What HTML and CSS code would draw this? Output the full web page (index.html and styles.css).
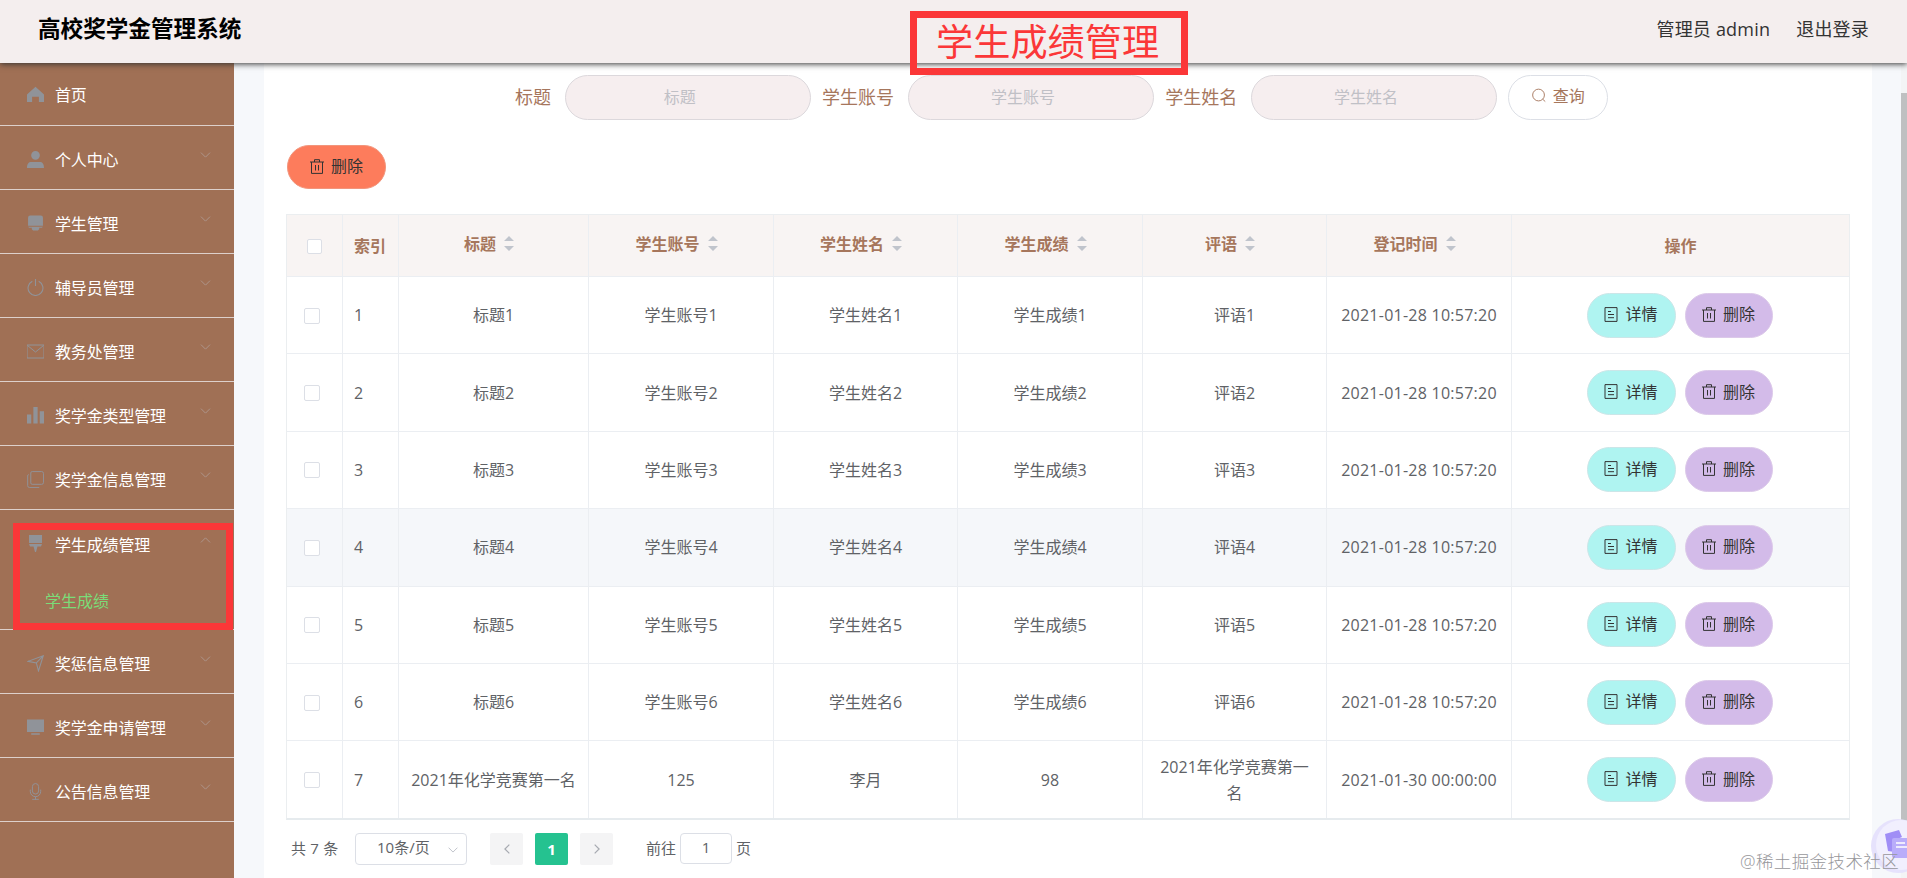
FILE: index.html
```html
<!DOCTYPE html>
<html lang="zh-CN">
<head>
<meta charset="utf-8">
<title>高校奖学金管理系统</title>
<link rel="stylesheet" href="styles.css">
</head>
<body>
<svg class="sprite" aria-hidden="true">
  <symbol id="home" viewBox="0 0 16 16"><path fill="currentColor" d="M8 .8 16 8v7h-4.800v-5H4.800v5H0V8z"/></symbol>
  <symbol id="user" viewBox="0 0 16 16"><path fill="currentColor" d="M8 0a4 4 0 1 1 0 8.200A4 4 0 0 1 8 0zM0 16c0-4 1.500-5.600 4-5.600h8c2.500 0 4 1.600 4 5.600z"/></symbol>
  <symbol id="school" viewBox="0 0 16 16"><path fill="currentColor" d="M3 .5h10a2 2 0 0 1 2 2V10H1V2.500a2 2 0 0 1 2-2zM1 11h14l-1 1h-2.500v1.500l-1.200 1H5.700l-1.200-1V12H2z"/></symbol>
  <symbol id="power" viewBox="0 0 16 16"><path fill="none" stroke="currentColor" d="M5 2.200a7 7 0 1 0 6 0M8 0v6.500"/></symbol>
  <symbol id="mail" viewBox="0 0 17 16"><path fill="none" stroke="currentColor" d="M0 1.500h17v13H0zM.5 2l8 6.500L16.500 2"/></symbol>
  <symbol id="bars" viewBox="0 0 16 16"><path fill="currentColor" d="M0 7h4v8.500H0zM6 0h4v15.500H6zM12 4h4v11.500h-4z"/></symbol>
  <symbol id="copy" viewBox="0 0 18 18"><path fill="none" stroke="currentColor" d="M5.500.6h10a2 2 0 0 1 2 2v9.500a2 2 0 0 1-2 2h-10a1.500 1.500 0 0 1-1.500-1.500V2.100A1.500 1.500 0 0 1 5.500.6zM2 3.800.7 4.500v11a2 2 0 0 0 2 2H13"/></symbol>
  <symbol id="brush" viewBox="0 0 16 17"><path fill="currentColor" d="M1.500 0h13v8h-13zM1.500 9h13l-1 2.500h-3.500L8.500 17h-1L6 11.500H2.500z"/></symbol>
  <symbol id="plane" viewBox="0 0 16 16"><path fill="none" stroke="currentColor" d="M15.300.7 10.800 15l-2-7.500L1 6zM8.800 7.500 15 1"/></symbol>
  <symbol id="screen" viewBox="0 0 16 16"><path fill="currentColor" d="M0 .5h16V12.200H0zM4 13.500h8v1.300H4z"/></symbol>
  <symbol id="mic" viewBox="0 0 16 18"><path fill="none" stroke="currentColor" d="M8 .6a3.300 3.300 0 0 1 3.300 3.300v4.500a3.300 3.300 0 0 1-6.600 0V3.900A3.300 3.300 0 0 1 8 .6zM2.500 7v2a5.500 5.500 0 0 0 11 0V7M8 14.500v3M4.500 17.300h7"/></symbol>
  <symbol id="down" viewBox="0 0 12 7"><path fill="none" stroke="currentColor" d="m.7.7 5.300 5.300L11.300.7"/></symbol>
  <symbol id="trash" viewBox="0 0 14 15"><path fill="none" stroke="currentColor" d="M0 3h14M1.500 3v11.400h11V3M4.500 3V.7h5V3M5.500 6v5.500M8.500 6v5.500"/></symbol>
  <symbol id="doc" viewBox="0 0 14 15"><path fill="none" stroke="currentColor" d="M1 .6h12v13.800H1zM4 4.500h3M4 7.500h6M4 10.700h6"/></symbol>
  <symbol id="search" viewBox="0 0 15 15"><path fill="none" stroke="currentColor" d="M7 .7a6.300 6.300 0 1 1 0 12.600A6.300 6.300 0 0 1 7 .7zM11.500 11.500l2.700 2.500"/></symbol>
  <symbol id="sort" viewBox="0 0 10 15"><path fill="#c0c4cc" d="M5 0l5 5H0zM0 10h10l-5 5z"/></symbol>
</svg>

<header class="topbar">
  <h1 class="brand">高校奖学金管理系统</h1>
  <nav class="account"><span>管理员 admin</span><span>退出登录</span></nav>
</header>

<div class="shell">
  <aside class="sidebar">
    <div class="item item-home"><svg class="ico"><use href="#home"/></svg><span>首页</span></div>
    <div class="item"><svg class="ico"><use href="#user"/></svg><span>个人中心</span><svg class="caret"><use href="#down"/></svg></div>
    <div class="item"><svg class="ico"><use href="#school"/></svg><span>学生管理</span><svg class="caret"><use href="#down"/></svg></div>
    <div class="item"><svg class="ico"><use href="#power"/></svg><span>辅导员管理</span><svg class="caret"><use href="#down"/></svg></div>
    <div class="item"><svg class="ico"><use href="#mail"/></svg><span>教务处管理</span><svg class="caret"><use href="#down"/></svg></div>
    <div class="item"><svg class="ico"><use href="#bars"/></svg><span>奖学金类型管理</span><svg class="caret"><use href="#down"/></svg></div>
    <div class="item"><svg class="ico"><use href="#copy"/></svg><span>奖学金信息管理</span><svg class="caret"><use href="#down"/></svg></div>
    <div class="group">
      <div class="item item-open"><svg class="ico"><use href="#brush"/></svg><span>学生成绩管理</span><svg class="caret caret-up"><use href="#down"/></svg></div>
      <div class="subitem">学生成绩</div>
      <div class="mark mark-menu"></div>
    </div>
    <div class="item"><svg class="ico"><use href="#plane"/></svg><span>奖惩信息管理</span><svg class="caret"><use href="#down"/></svg></div>
    <div class="item"><svg class="ico"><use href="#screen"/></svg><span>奖学金申请管理</span><svg class="caret"><use href="#down"/></svg></div>
    <div class="item"><svg class="ico"><use href="#mic"/></svg><span>公告信息管理</span><svg class="caret"><use href="#down"/></svg></div>
  </aside>

  <main class="panel">
    <form class="filters">
      <label>标题</label><div class="field">标题</div>
      <label>学生账号</label><div class="field">学生账号</div>
      <label>学生姓名</label><div class="field">学生姓名</div>
      <div class="btn btn-search"><svg><use href="#search"/></svg>查询</div>
    </form>
    <div class="actions"><div class="btn btn-remove-all"><svg><use href="#trash"/></svg>删除</div></div>

    <div class="table">
      <div class="row head">
        <div><i class="box"></i></div><div class="idx">索引</div>
        <div class="sortable">标题<svg><use href="#sort"/></svg></div>
        <div class="sortable">学生账号<svg><use href="#sort"/></svg></div>
        <div class="sortable">学生姓名<svg><use href="#sort"/></svg></div>
        <div class="sortable">学生成绩<svg><use href="#sort"/></svg></div>
        <div class="sortable">评语<svg><use href="#sort"/></svg></div>
        <div class="sortable">登记时间<svg><use href="#sort"/></svg></div>
        <div>操作</div>
      </div>
      <div class="row"><div><i class="box"></i></div><div class="idx">1</div><div>标题1</div><div>学生账号1</div><div>学生姓名1</div><div>学生成绩1</div><div>评语1</div><div class="time">2021-01-28 10:57:20</div><div class="ops"><span class="btn btn-view"><svg><use href="#doc"/></svg>详情</span><span class="btn btn-del"><svg><use href="#trash"/></svg>删除</span></div></div>
      <div class="row"><div><i class="box"></i></div><div class="idx">2</div><div>标题2</div><div>学生账号2</div><div>学生姓名2</div><div>学生成绩2</div><div>评语2</div><div class="time">2021-01-28 10:57:20</div><div class="ops"><span class="btn btn-view"><svg><use href="#doc"/></svg>详情</span><span class="btn btn-del"><svg><use href="#trash"/></svg>删除</span></div></div>
      <div class="row"><div><i class="box"></i></div><div class="idx">3</div><div>标题3</div><div>学生账号3</div><div>学生姓名3</div><div>学生成绩3</div><div>评语3</div><div class="time">2021-01-28 10:57:20</div><div class="ops"><span class="btn btn-view"><svg><use href="#doc"/></svg>详情</span><span class="btn btn-del"><svg><use href="#trash"/></svg>删除</span></div></div>
      <div class="row hover"><div><i class="box"></i></div><div class="idx">4</div><div>标题4</div><div>学生账号4</div><div>学生姓名4</div><div>学生成绩4</div><div>评语4</div><div class="time">2021-01-28 10:57:20</div><div class="ops"><span class="btn btn-view"><svg><use href="#doc"/></svg>详情</span><span class="btn btn-del"><svg><use href="#trash"/></svg>删除</span></div></div>
      <div class="row"><div><i class="box"></i></div><div class="idx">5</div><div>标题5</div><div>学生账号5</div><div>学生姓名5</div><div>学生成绩5</div><div>评语5</div><div class="time">2021-01-28 10:57:20</div><div class="ops"><span class="btn btn-view"><svg><use href="#doc"/></svg>详情</span><span class="btn btn-del"><svg><use href="#trash"/></svg>删除</span></div></div>
      <div class="row"><div><i class="box"></i></div><div class="idx">6</div><div>标题6</div><div>学生账号6</div><div>学生姓名6</div><div>学生成绩6</div><div>评语6</div><div class="time">2021-01-28 10:57:20</div><div class="ops"><span class="btn btn-view"><svg><use href="#doc"/></svg>详情</span><span class="btn btn-del"><svg><use href="#trash"/></svg>删除</span></div></div>
      <div class="row"><div><i class="box"></i></div><div class="idx">7</div><div>2021年化学竞赛第一名</div><div>125</div><div>李月</div><div>98</div><div class="note">2021年化学竞赛第一名</div><div class="time">2021-01-30 00:00:00</div><div class="ops"><span class="btn btn-view"><svg><use href="#doc"/></svg>详情</span><span class="btn btn-del"><svg><use href="#trash"/></svg>删除</span></div></div>
    </div>

    <div class="pager">
      <span class="total">共 7 条</span>
      <div class="size"><span>10条/页</span><svg><use href="#down"/></svg></div>
      <div class="page"><svg class="prev"><use href="#down"/></svg></div>
      <div class="page current">1</div>
      <div class="page"><svg class="next"><use href="#down"/></svg></div>
      <span class="goto">前往</span><div class="jump">1</div><span>页</span>
    </div>
  </main>
  <div class="scrollbar"><div class="thumb"></div></div>
</div>

<div class="mark mark-title">学生成绩管理</div>
<svg class="float" viewBox="0 0 38 56"><circle cx="28" cy="28" r="27" fill="#e6e2fc"/><circle cx="31" cy="27" r="25" fill="#f1effe"/><path fill="#a08ef6" d="m15 16 14-4 3 7-7 3v12l-7-1z"/><rect x="22" y="20" width="24" height="20" rx="2" fill="#b9adfa"/><path stroke="#fff" stroke-width="1.500" d="M26 25h9M26 29h12"/></svg>
<div class="watermark">@稀土掘金技术社区</div>
</body>
</html>
```
FILE: styles.css
```css
* { box-sizing: border-box; }
body {
  margin: 0;
  width: 1907px;
  height: 878px;
  overflow: hidden;
  position: relative;
  background: #fff;
  color: #606266;
  font: 16px/24px "Open Sans", "Noto Sans CJK SC", sans-serif;
}
.sprite { position: absolute; width: 0; height: 0; }
svg { display: block; flex: none; overflow: visible; }

.topbar {
  position: relative;
  z-index: 2;
  height: 63px;
  padding: 0 38px 6px;
  display: flex;
  align-items: center;
  justify-content: space-between;
  background: #f4eeee;
  box-shadow: 0 1px 6px #333;
}
.brand { margin: 0; color: #000; font-size: 22.600px; font-weight: 700; line-height: 30px; }
.account { display: flex; gap: 26px; color: #333; font-size: 18px; letter-spacing: .2px; }

.shell { display: flex; height: 815px; background: #f6f8fb; }

.sidebar { width: 234px; background: #a07055; color: #fff; }
.item {
  height: 64px;
  padding: 5px 23px 0 27px;
  display: flex;
  align-items: center;
  border-bottom: 1px solid #ddd0cb;
}
.item-home { height: 63px; padding-top: 2px; }
.item span { flex: 1; margin-left: 11px; letter-spacing: -.15px; }
.ico { width: 17px; height: 17px; color: #909399; position: relative; top: -1px; }
.caret { width: 11px; height: 6px; color: #b09a92; position: relative; top: -5px; }
.caret-up { transform: rotate(180deg); }
.group { position: relative; height: 120px; border-bottom: 1px solid #ddd0cb; }
.item-open { border-bottom: 0; }
.subitem { padding: 15px 0 0 45px; color: #7bdc78; }

.mark { position: absolute; border: 7px solid #fb3738; }
.mark-menu { left: 13px; top: 13px; width: 220px; height: 107px; }
.mark-title {
  z-index: 3;
  left: 910px;
  top: 11px;
  width: 278px;
  height: 64px;
  padding-left: 19px;
  color: #fb3738;
  font-size: 37.200px;
  line-height: 47px;
  white-space: nowrap;
}

.panel { width: 1608px; margin-left: 30px; padding: 12px 23px 0 22px; background: #fff; }
.filters { display: flex; height: 45px; align-items: center; margin-left: 229px; color: #a6765c; font-size: 18px; }
.filters label { position: relative; top: -1px; }
.field {
  width: 246.500px;
  height: 45px;
  margin: 0 11px 0 13.600px;
  padding-right: 16px;
  border: 1px solid #dcd8dc;
  border-radius: 23px;
  background: #f6eeef;
  color: #c0c0c6;
  font-size: 16px;
  line-height: 43px;
  text-align: center;
}
.btn {
  display: flex;
  justify-content: center;
  align-items: center;
  gap: 7px;
  height: 45px;
  padding-bottom: 2px;
  border-radius: 23px;
  color: #333;
  font-size: 16px;
}
.btn svg { width: 14px; height: 15px; }
.btn-search { width: 100px; padding-bottom: 4px; border: 1px solid #dcdfe6; color: #a6765c; }
.actions { margin-top: 25px; }
.btn-remove-all { width: 99px; height: 44px; margin-left: 1px; background: #fd7c5c; border: 1px solid #f2957c; }

.table { margin-top: 25px; width: 1564px; border: 1px solid #ebeef0; border-bottom: 2px solid #e6ebee; }
.row { display: grid; grid-template-columns: 56px 56px 190px 185px 184px 185px 184px 185px 337px; height: 77.400px; border-bottom: 1px solid #ebeef2; }
.row:last-child { border-bottom: 0; height: 76.500px; }
.row > div { display: flex; align-items: center; justify-content: center; border-right: 1px solid #ebeef2; }
.row > div:last-child { border-right: 0; }
.row > .idx { justify-content: flex-start; padding-left: 11px; }
.head { height: 62px; background: #f8f4f3; color: #a6765c; font-weight: 700; }
.head > .sortable { gap: 8px; padding: 0 9px 4px 0; }
.sortable svg { width: 10px; height: 15px; }
.box { width: 16px; height: 16px; margin: 1px 5px 0 0; border: 1px solid #dcdfe6; border-radius: 2px; background: #fff; }
.head .box { width: 15px; height: 15px; margin-right: 0; }
.hover { background: #f5f7fa; }
.time { letter-spacing: .25px; }
.row > .note { padding: 0 10px; text-align: center; line-height: 26px; }
.row > .ops { gap: 9px; padding-right: 2px; }
.btn-view { width: 89px; background: #aff4f1; border: 1px solid #cbe6e8; }
.btn-del { width: 88px; background: #d3bbe9; border: 1px solid #dcc9e9; }

.pager { display: flex; align-items: center; margin: 13px 0 0 5px; height: 32px; font-size: 15px; }
.total { width: 64px; letter-spacing: .2px; }
.pager > span { position: relative; top: -1px; }
.size { width: 112px; height: 32px; margin-right: 23px; padding: 0 8px 3px 21px; display: flex; align-items: center; justify-content: space-between; border: 1px solid #dcdfe6; border-radius: 4px; }
.size svg { width: 10px; height: 6px; color: #b4b8c0; margin-top: 5px; }
.page { width: 33px; height: 32px; margin-right: 12px; display: flex; align-items: center; justify-content: center; background: #f4f4f5; border-radius: 2px; }
.page svg { width: 10px; height: 6px; color: #a8abb2; stroke-width: 1.500; }
.prev { transform: rotate(90deg); }
.next { transform: rotate(-90deg); }
.page.current { background: #25c290; color: #fff; font-weight: 700; }
.goto { margin: 0 4px 0 21px; }
.jump { width: 52px; height: 31px; margin-right: 4px; border: 1px solid #dcdfe6; border-radius: 4px; text-align: center; line-height: 27px; }

.scrollbar { width: 6px; margin-left: auto; padding-top: 30px; background: #f3f4f5; }
.thumb { height: 731px; background: #bfc0c1; }
.float { position: absolute; z-index: 3; left: 1870px; top: 818px; width: 38px; height: 56px; }
.watermark { position: absolute; z-index: 4; left: 1740px; top: 849px; color: #97979b; font-size: 17.500px; font-weight: 300; letter-spacing: .4px; white-space: nowrap; }
```
